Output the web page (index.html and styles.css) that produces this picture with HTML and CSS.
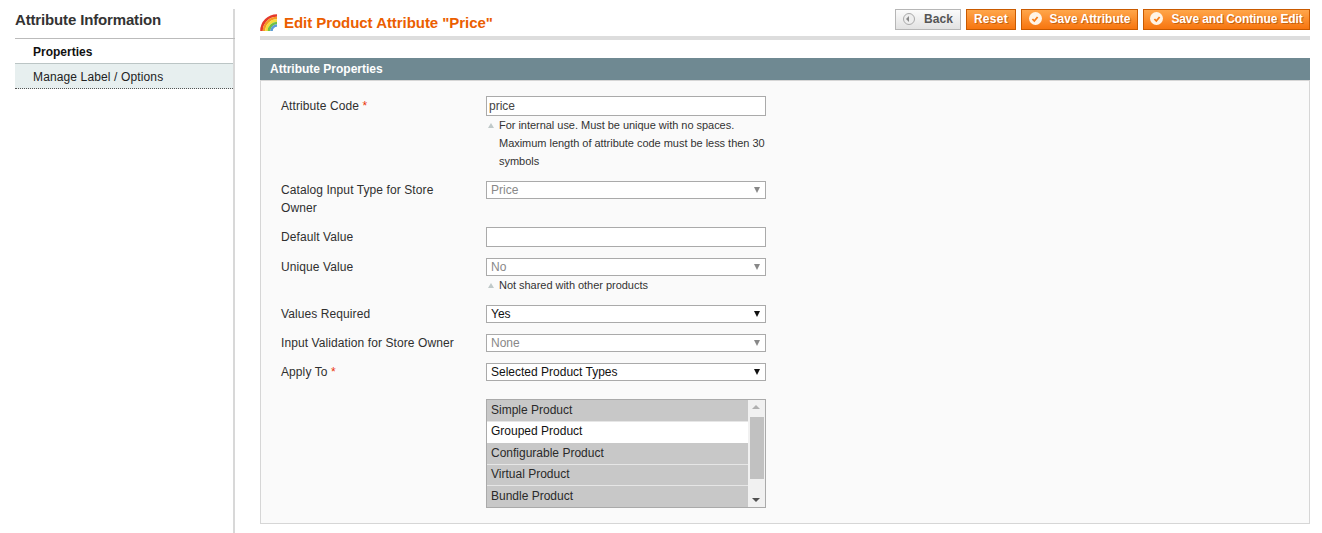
FILE: index.html
```html
<!DOCTYPE html>
<html lang="en">
<head>
    <meta charset="UTF-8">
    <title>Edit Product Attribute | Magento Admin</title>
    <link rel="stylesheet" href="styles.css">
</head>
<body>
    <div class="page">
        <aside class="side">
            <h3 class="side-title">Attribute Information</h3>
            <a class="side-link active">Properties</a>
            <a class="side-link alt">Manage Label / Options</a>
        </aside>

        <main class="content">
            <div class="head">
                <h1 class="head-title">
                    <svg class="rainbow" viewBox="0 0 18 17" width="18" height="17">
                        <path d="M1.5 17 A15.5 15.5 0 0 1 17 1.5" stroke="#e5392b" stroke-width="2.6" fill="none"/>
                        <path d="M4 17 A13 13 0 0 1 17 4" stroke="#f59a23" stroke-width="2.6" fill="none"/>
                        <path d="M6.5 17 A10.5 10.5 0 0 1 17 6.5" stroke="#f4dc3a" stroke-width="2.6" fill="none"/>
                        <path d="M9 17 A8 8 0 0 1 17 9" stroke="#6fbf45" stroke-width="2.6" fill="none"/>
                        <path d="M11.5 17 A5.5 5.5 0 0 1 17 11.5" stroke="#5b9bd8" stroke-width="2.6" fill="none"/>
                    </svg>
                    Edit Product Attribute "Price"
                </h1>
                <div class="actions">
                    <button class="btn back"><span class="ico-back"></span>Back</button>
                    <button class="btn reset">Reset</button>
                    <button class="btn save"><span class="ico-ok"><svg viewBox="0 0 10 10" width="10" height="10"><path d="M2.4 5 L4.3 7 L7.6 3" stroke="#f77c16" stroke-width="1.8" fill="none"/></svg></span>Save Attribute</button>
                    <button class="btn save long"><span class="ico-ok"><svg viewBox="0 0 10 10" width="10" height="10"><path d="M2.4 5 L4.3 7 L7.6 3" stroke="#f77c16" stroke-width="1.8" fill="none"/></svg></span>Save and Continue Edit</button>
                </div>
            </div>

            <section class="panel">
                <h4 class="panel-head">Attribute Properties</h4>
                <div class="panel-body">
                    <div class="row row-code">
                        <label>Attribute Code <em>*</em></label>
                        <div class="value">
                            <input class="field" type="text" value="price">
                            <p class="note">For internal use. Must be unique with no spaces.<br>Maximum length of attribute code must be less then 30<br>symbols</p>
                        </div>
                    </div>
                    <div class="row row-type">
                        <label>Catalog Input Type for Store Owner</label>
                        <div class="value">
                            <div class="pick off"><select disabled><option>Price</option></select></div>
                        </div>
                    </div>
                    <div class="row row-default">
                        <label>Default Value</label>
                        <div class="value"><input class="field" type="text"></div>
                    </div>
                    <div class="row row-unique">
                        <label>Unique Value</label>
                        <div class="value">
                            <div class="pick off"><select disabled><option>No</option></select></div>
                            <p class="note">Not shared with other products</p>
                        </div>
                    </div>
                    <div class="row">
                        <label>Values Required</label>
                        <div class="value">
                            <div class="pick"><select><option>Yes</option></select></div>
                        </div>
                    </div>
                    <div class="row">
                        <label>Input Validation for Store Owner</label>
                        <div class="value">
                            <div class="pick off"><select disabled><option>None</option></select></div>
                        </div>
                    </div>
                    <div class="row">
                        <label>Apply To <em>*</em></label>
                        <div class="value">
                            <div class="pick"><select><option>Selected Product Types</option></select></div>
                        </div>
                    </div>
                    <div class="row row-list">
                        <label></label>
                        <div class="value">
                            <div class="listbox">
                                <ul class="list-items">
                                    <li class="sel">Simple Product</li>
                                    <li>Grouped Product</li>
                                    <li class="sel">Configurable Product</li>
                                    <li class="sel">Virtual Product</li>
                                    <li class="sel">Bundle Product</li>
                                </ul>
                                <div class="scroll">
                                    <span class="arrow up"></span>
                                    <span class="thumb"></span>
                                    <span class="arrow down"></span>
                                </div>
                            </div>
                        </div>
                    </div>
                </div>
            </section>
        </main>
    </div>
</body>
</html>
```

FILE: styles.css
```css
* {
    margin: 0;
    padding: 0;
    box-sizing: border-box;
}

body {
    background: white;
    color: #2f2f2f;
    font-family: "Liberation Sans", Arial, sans-serif;
    font-size: 12px;
    overflow: hidden;
}

.page {
    display: flex;
    height: 533px;
    padding: 9px 12px 0 15px;
}

.side {
    width: 220px;
    border-right: 2px solid #d8d8d8;
    flex-shrink: 0;
}

.side-title {
    height: 30px;
    margin-right: -2px;
    border-bottom: 1px solid #bbb;
    color: #333;
    font-size: 15px;
    font-weight: bold;
    letter-spacing: -0.15px;
    line-height: 21px;
}

.side-link {
    display: block;
    height: 24px;
    padding-left: 18px;
    color: #222;
    line-height: 26px;
}

.side-link.active {
    font-weight: bold;
    color: #111;
}

.side-link.alt {
    height: 26px;
    background: #e7efef;
    border-top: 1px solid #bbc5c5;
    border-bottom: 1px dotted #555;
    letter-spacing: 0.13px;
    line-height: 26px;
}

.content {
    flex: 1;
    margin-left: 25px;
}

.head {
    display: flex;
    justify-content: space-between;
    box-sizing: content-box;
    height: 27px;
    border-bottom: 4px solid #ddd;
}

.head-title {
    display: flex;
    align-items: flex-start;
    gap: 6px;
    padding-top: 5px;
    color: #eb5e00;
    font-size: 15px;
    font-weight: bold;
    letter-spacing: -0.05px;
    line-height: 18px;
}

.actions {
    display: flex;
    gap: 5px;
    height: 21px;
}

.btn {
    display: flex;
    align-items: center;
    justify-content: center;
    padding: 0 0 2px;
    border: 1px solid #c95a00;
    background: linear-gradient(#ffa64a, #f7750f);
    color: white;
    font-family: inherit;
    font-size: 12px;
    font-weight: bold;
    text-shadow: 1px 1px 0 #c8600f;
}

.btn.back {
    width: 66px;
    border-color: #b6b6b6;
    background: linear-gradient(#fbfbfb, #e2e2e2);
    color: #555;
    letter-spacing: 0.1px;
    text-shadow: none;
}

.btn.reset {
    width: 50px;
    letter-spacing: 0.3px;
}

.btn.save {
    width: 117px;
}

.btn.save.long {
    width: 167px;
    letter-spacing: -0.13px;
}

.ico-back {
    position: relative;
    width: 12px;
    height: 12px;
    margin-right: 9px;
    border: 1px solid #aaa;
    border-radius: 50%;
    background: #eee;
}

.ico-back::after {
    content: "";
    position: absolute;
    left: 2px;
    top: 2px;
    border: 3px solid transparent;
    border-left: 0;
    border-right: 3px solid #888;
}

.ico-ok {
    display: flex;
    align-items: center;
    justify-content: center;
    width: 13px;
    height: 13px;
    margin-right: 8px;
    border-radius: 50%;
    background: #fff4e6;
}

.panel {
    margin-top: 18px;
}

.panel-head {
    height: 22px;
    padding-left: 10px;
    background: #6f8992;
    color: white;
    font-size: 12px;
    font-weight: bold;
    line-height: 22px;
}

.panel-body {
    height: 444px;
    padding: 15px 0 0 20px;
    background: #fafafa;
    border: 1px solid #d6d6d6;
}

.row {
    display: flex;
    margin-top: 11px;
}

.row label {
    width: 205px;
    flex-shrink: 0;
    padding-right: 25px;
    color: #2f2f2f;
    letter-spacing: 0.09px;
    line-height: 18px;
}

.row label em {
    color: #eb340a;
    font-style: normal;
}

.row-code {
    margin-top: 0;
}

.row-code label,
.row-default label {
    padding-top: 1px;
}

.row-default {
    margin-top: 10px;
}

.row-list {
    margin-top: 18px;
}

.value {
    width: 280px;
}

.field {
    display: block;
    width: 280px;
    height: 20px;
    padding: 0 2px;
    border: 1px solid #aaa;
    background: white;
    color: #444;
    font-family: inherit;
    font-size: 12px;
}

.note {
    position: relative;
    padding-left: 13px;
    color: #333;
    font-size: 11px;
    letter-spacing: -0.03px;
    line-height: 18px;
    white-space: nowrap;
}

.note::before {
    content: "";
    position: absolute;
    left: 2px;
    top: 7px;
    border: 3.5px solid transparent;
    border-top: 0;
    border-bottom: 5px solid #c0c9c9;
}

.pick {
    position: relative;
    height: 18px;
}

.pick select {
    display: block;
    width: 280px;
    height: 18px;
    padding: 0 0 0 4px;
    border: 1px solid #aaa;
    border-radius: 0;
    background: white;
    color: #111;
    font-family: inherit;
    font-size: 12px;
    appearance: none;
    opacity: 1;
}

.pick::after {
    content: "";
    position: absolute;
    right: 6px;
    top: 6px;
    border: 3.5px solid transparent;
    border-bottom: 0;
    border-top: 6px solid #111;
}

.pick.off select {
    color: #888;
}

.pick.off::after {
    border-top-color: #888;
}

.listbox {
    display: flex;
    width: 280px;
    height: 109px;
    border: 1px solid #aaa;
    background: #c8c8c8;
    overflow: hidden;
}

.list-items {
    flex: 1;
    list-style: none;
}

.list-items li {
    height: 21.5px;
    padding-left: 4px;
    background: white;
    color: #111;
    line-height: 20px;
}

.list-items li:nth-child(even) {
    line-height: 18px;
}

.list-items li.sel {
    background: #c8c8c8;
    border-bottom: 1px solid #e6e6e6;
    color: #2a2a2a;
}

.scroll {
    position: relative;
    width: 17px;
    background: #f1f1f1;
}

.thumb {
    position: absolute;
    left: 2px;
    right: 1px;
    top: 17px;
    height: 62px;
    background: #c1c1c1;
}

.arrow {
    position: absolute;
    left: 4px;
    border: 4px solid transparent;
}

.arrow.up {
    top: 5px;
    border-top: 0;
    border-bottom: 4px solid #b0b0b0;
}

.arrow.down {
    bottom: 5px;
    border-bottom: 0;
    border-top: 4px solid #505050;
}
```
